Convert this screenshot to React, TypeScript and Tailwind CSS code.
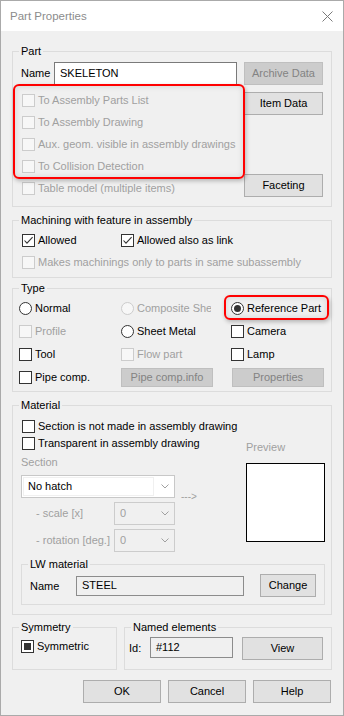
import React from "react";

type BoxProps = { checked?: boolean; mixed?: boolean; disabled?: boolean };

const Box = ({ checked, mixed, disabled }: BoxProps) => (
  <span
    className={`w-[13px] h-[13px] shrink-0 border flex items-center justify-center ${
      disabled ? "border-[#cccccc] bg-[#f7f7f7]" : "border-[#333333] bg-white"
    }`}
  >
    {checked && (
      <svg width="11" height="11" viewBox="0 0 11 11">
        <path d="M1.5 5.5 L4 8.2 L9.6 2.2" fill="none" stroke="#333333" strokeWidth="1.1" />
      </svg>
    )}
    {mixed && <span className="w-[7px] h-[7px] bg-[#333333]" />}
  </span>
);

const Radio = ({ checked, disabled }: { checked?: boolean; disabled?: boolean }) => (
  <span
    className={`w-[13px] h-[13px] shrink-0 rounded-full border flex items-center justify-center ${
      disabled ? "border-[#cccccc] bg-[#f7f7f7]" : "border-[#333333] bg-white"
    }`}
  >
    {checked && <span className="w-[7px] h-[7px] rounded-full bg-[#333333]" />}
  </span>
);

const Btn = ({
  children,
  disabled,
  className = "",
}: {
  children: React.ReactNode;
  disabled?: boolean;
  className?: string;
}) => (
  <button
    type="button"
    className={`h-[23px] flex items-center justify-center border ${
      disabled ? "bg-[#cccccc] border-[#bfbfbf] text-[#838383]" : "bg-[#e1e1e1] border-[#adadad] text-black"
    } ${className}`}
  >
    {children}
  </button>
);

const Group = ({
  label,
  className = "",
  children,
}: {
  label: string;
  className?: string;
  children?: React.ReactNode;
}) => (
  <div className={`relative border border-[#dcdcdc] ${className}`}>
    <span className="absolute -top-[7px] left-[6px] px-[2px] bg-[#f0f0f0] leading-[13px] text-black whitespace-nowrap">
      {label}
    </span>
    {children}
  </div>
);

const Chevron = () => (
  <svg width="8" height="5" viewBox="0 0 8 5">
    <path d="M0.5 0.5 L4 4 L7.5 0.5" fill="none" stroke="#a0a0a0" />
  </svg>
);

const Combo = ({
  value,
  disabled,
  className = "",
}: {
  value: string;
  disabled?: boolean;
  className?: string;
}) => (
  <div
    className={`h-[23px] flex border ${
      disabled ? "border-[#cccccc] bg-[#f0f0f0]" : "border-[#c8c8c8] bg-white"
    } ${className}`}
  >
    <div
      className={`flex-1 flex items-center pl-[4px] m-[1px] ${
        disabled ? "text-[#a0a0a0]" : "text-black border border-[#f0f0f0]"
      }`}
    >
      {value}
    </div>
    <div className="w-[19px] flex items-center justify-center">
      <Chevron />
    </div>
  </div>
);

const CheckRow = ({
  label,
  checked,
  disabled,
  className = "h-[22px]",
}: {
  label: string;
  checked?: boolean;
  disabled?: boolean;
  className?: string;
}) => (
  <div className={`flex items-center ${className}`}>
    <Box checked={checked} disabled={disabled} />
    <span className={`ml-[3px] whitespace-nowrap ${disabled ? "text-[#a0a0a0]" : "text-black"}`}>{label}</span>
  </div>
);

const RadioRow = ({ label, checked, disabled }: { label: string; checked?: boolean; disabled?: boolean }) => (
  <div className="flex items-center">
    <Radio checked={checked} disabled={disabled} />
    <span className={`ml-[3px] whitespace-nowrap ${disabled ? "text-[#a0a0a0]" : "text-black"}`}>{label}</span>
  </div>
);

const App = () => {
  return (
    <div className="w-[344px] h-[716px] flex flex-col bg-[#f0f0f0] border border-[#aaaaaa] overflow-hidden font-['Liberation_Sans',Arial,sans-serif] text-[11px] leading-[13px] text-black">
      {/* title bar */}
      <div className="h-[30px] shrink-0 bg-white flex items-center justify-between pl-[9px] pr-[10px]">
        <span className="text-[11.5px] text-[#8c8c8c]">Part Properties</span>
        <svg width="11" height="11" viewBox="0 0 11 11">
          <path d="M0.5 0.5 L10.5 10.5 M10.5 0.5 L0.5 10.5" stroke="#7a7a7a" strokeWidth="1" />
        </svg>
      </div>

      <div className="flex flex-col px-[11px]">
        {/* Part */}
        <Group label="Part" className="mt-[20px] w-[320px] pl-[8px] pt-[10px] pb-[7px]">
          <div className="flex items-center h-[23px]">
            <span className="w-[33px]">Name</span>
            <div className="w-[183px] h-[23px] border border-[#7a7a7a] bg-white flex items-center pl-[5px]">
              SKELETON
            </div>
            <Btn disabled className="ml-[7px] w-[79px]">
              Archive Data
            </Btn>
          </div>
          <div className="flex">
            <div className="w-[223px] pt-[4px] pl-[1px] flex flex-col">
              <CheckRow label="To Assembly Parts List" disabled />
              <CheckRow label="To Assembly Drawing" disabled />
              <CheckRow label="Aux. geom. visible in assembly drawings" disabled />
              <CheckRow label="To Collision Detection" disabled />
              <CheckRow label="Table model (multiple items)" disabled />
            </div>
            <div className="pt-[7px] flex flex-col">
              <Btn className="w-[79px]">Item Data</Btn>
              <Btn className="w-[79px] mt-[59px]">Faceting</Btn>
            </div>
          </div>
          <div className="pointer-events-none absolute left-0 top-[32px] w-[232px] h-[95px] border-2 border-[#ff0000] rounded-[6px] shadow-[1px_2px_4px_rgba(0,0,0,0.25),inset_0_0_6px_rgba(0,0,0,0.12)]" />
        </Group>

        {/* Machining */}
        <Group label="Machining with feature in assembly" className="mt-[13px] w-[320px] pl-[9px] pt-[8px] pb-[4px]">
          <div className="flex h-[22px] items-center">
            <div className="w-[99px]">
              <CheckRow label="Allowed" checked />
            </div>
            <CheckRow label="Allowed also as link" checked />
          </div>
          <CheckRow label="Makes machinings only to parts in same subassembly" disabled />
        </Group>

        {/* Type */}
        <Group label="Type" className="mt-[10px] w-[320px] pl-[6px] pt-[8px] pb-[2px]">
          <div className="grid grid-cols-[102px_110px_1fr] auto-rows-[23px] items-center">
            <RadioRow label="Normal" />
            <div className="flex items-center">
              <Radio disabled />
              <span className="ml-[3px] w-[74px] overflow-hidden whitespace-nowrap text-[#a0a0a0]">
                Composite Sheet Metal
              </span>
            </div>
            <RadioRow label="Reference Part" checked />

            <CheckRow label="Profile" disabled className="h-[23px]" />
            <RadioRow label="Sheet Metal" />
            <CheckRow label="Camera" className="h-[23px]" />

            <CheckRow label="Tool" className="h-[23px]" />
            <CheckRow label="Flow part" disabled className="h-[23px]" />
            <CheckRow label="Lamp" className="h-[23px]" />

            <CheckRow label="Pipe comp." className="h-[23px]" />
            <Btn disabled className="w-[92px] !h-[19px]">
              Pipe comp.info
            </Btn>
            <Btn disabled className="ml-[1px] w-[92px] !h-[19px]">
              Properties
            </Btn>
          </div>
          <div className="pointer-events-none absolute left-[211px] top-[6px] w-[105px] h-[25px] border-2 border-[#ff0000] rounded-[6px] shadow-[1px_2px_4px_rgba(0,0,0,0.25),inset_0_0_6px_rgba(0,0,0,0.12)]" />
        </Group>

        {/* Material */}
        <Group label="Material" className="mt-[13px] w-[320px] pl-[8px] pt-[12px] pb-[9px]">
          <div className="flex">
            <div className="w-[225px] flex flex-col">
              <div className="pl-[1px]">
                <CheckRow label="Section is not made in assembly drawing" className="h-[17px]" />
                <CheckRow label="Transparent in assembly drawing" className="h-[17px]" />
              </div>
              <div className="mt-[4px] text-[#a0a0a0]">Section</div>
              <div className="mt-[6px] flex h-[23px]">
                <Combo value="No hatch" className="w-[154px]" />
                <span className="ml-[6px] mt-[15px] text-[#a0a0a0] text-[10px]">---&gt;</span>
              </div>
              <div className="mt-[4px] flex items-center h-[23px]">
                <span className="w-[93px] pl-[15px] text-[#a0a0a0]">- scale [x]</span>
                <Combo value="0" disabled className="w-[61px]" />
              </div>
              <div className="mt-[4px] flex items-center h-[23px]">
                <span className="w-[93px] pl-[15px] text-[#a0a0a0] whitespace-nowrap">- rotation [deg.]</span>
                <Combo value="0" disabled className="w-[61px]" />
              </div>
            </div>
            <div className="pt-[23px]">
              <div className="text-[#a0a0a0]">Preview</div>
              <div className="mt-[9px] w-[79px] h-[79px] bg-white border border-black" />
            </div>
          </div>

          <Group label="LW material" className="mt-[12px] w-[304px] h-[41px] pl-[8px] pt-[9px]">
            <div className="flex items-center h-[23px]">
              <span className="w-[46px] pt-[2px]">Name</span>
              <div className="w-[168px] h-[20px] border border-[#8c8c8c] bg-[#f0f0f0] flex items-center pl-[5px]">
                STEEL
              </div>
              <Btn className="ml-[16px] w-[56px]">Change</Btn>
            </div>
          </Group>
        </Group>

        {/* Symmetry / Named elements */}
        <div className="mt-[12px] flex gap-[7px]">
          <Group label="Symmetry" className="w-[105px] h-[43px] pl-[8px] pt-[10px]">
            <div className="flex items-center h-[17px]">
              <Box mixed />
              <span className="ml-[3px]">Symmetric</span>
            </div>
          </Group>
          <Group label="Named elements" className="w-[208px] h-[43px] pl-[4px] pt-[9px]">
            <div className="flex items-start">
              <span className="w-[21px] mt-[5px]">Id:</span>
              <div className="w-[83px] h-[21px] border border-[#8c8c8c] bg-[#f0f0f0] flex items-center pl-[5px]">
                #112
              </div>
              <Btn className="ml-[9px] w-[81px]">View</Btn>
            </div>
          </Group>
        </div>

        {/* dialog buttons */}
        <div className="mt-[10px] w-[320px] pr-[1px] flex justify-end gap-[7px]">
          <Btn className="w-[78px]">OK</Btn>
          <Btn className="w-[78px]">Cancel</Btn>
          <Btn className="w-[78px]">Help</Btn>
        </div>
      </div>
    </div>
  );
};

export default App;
